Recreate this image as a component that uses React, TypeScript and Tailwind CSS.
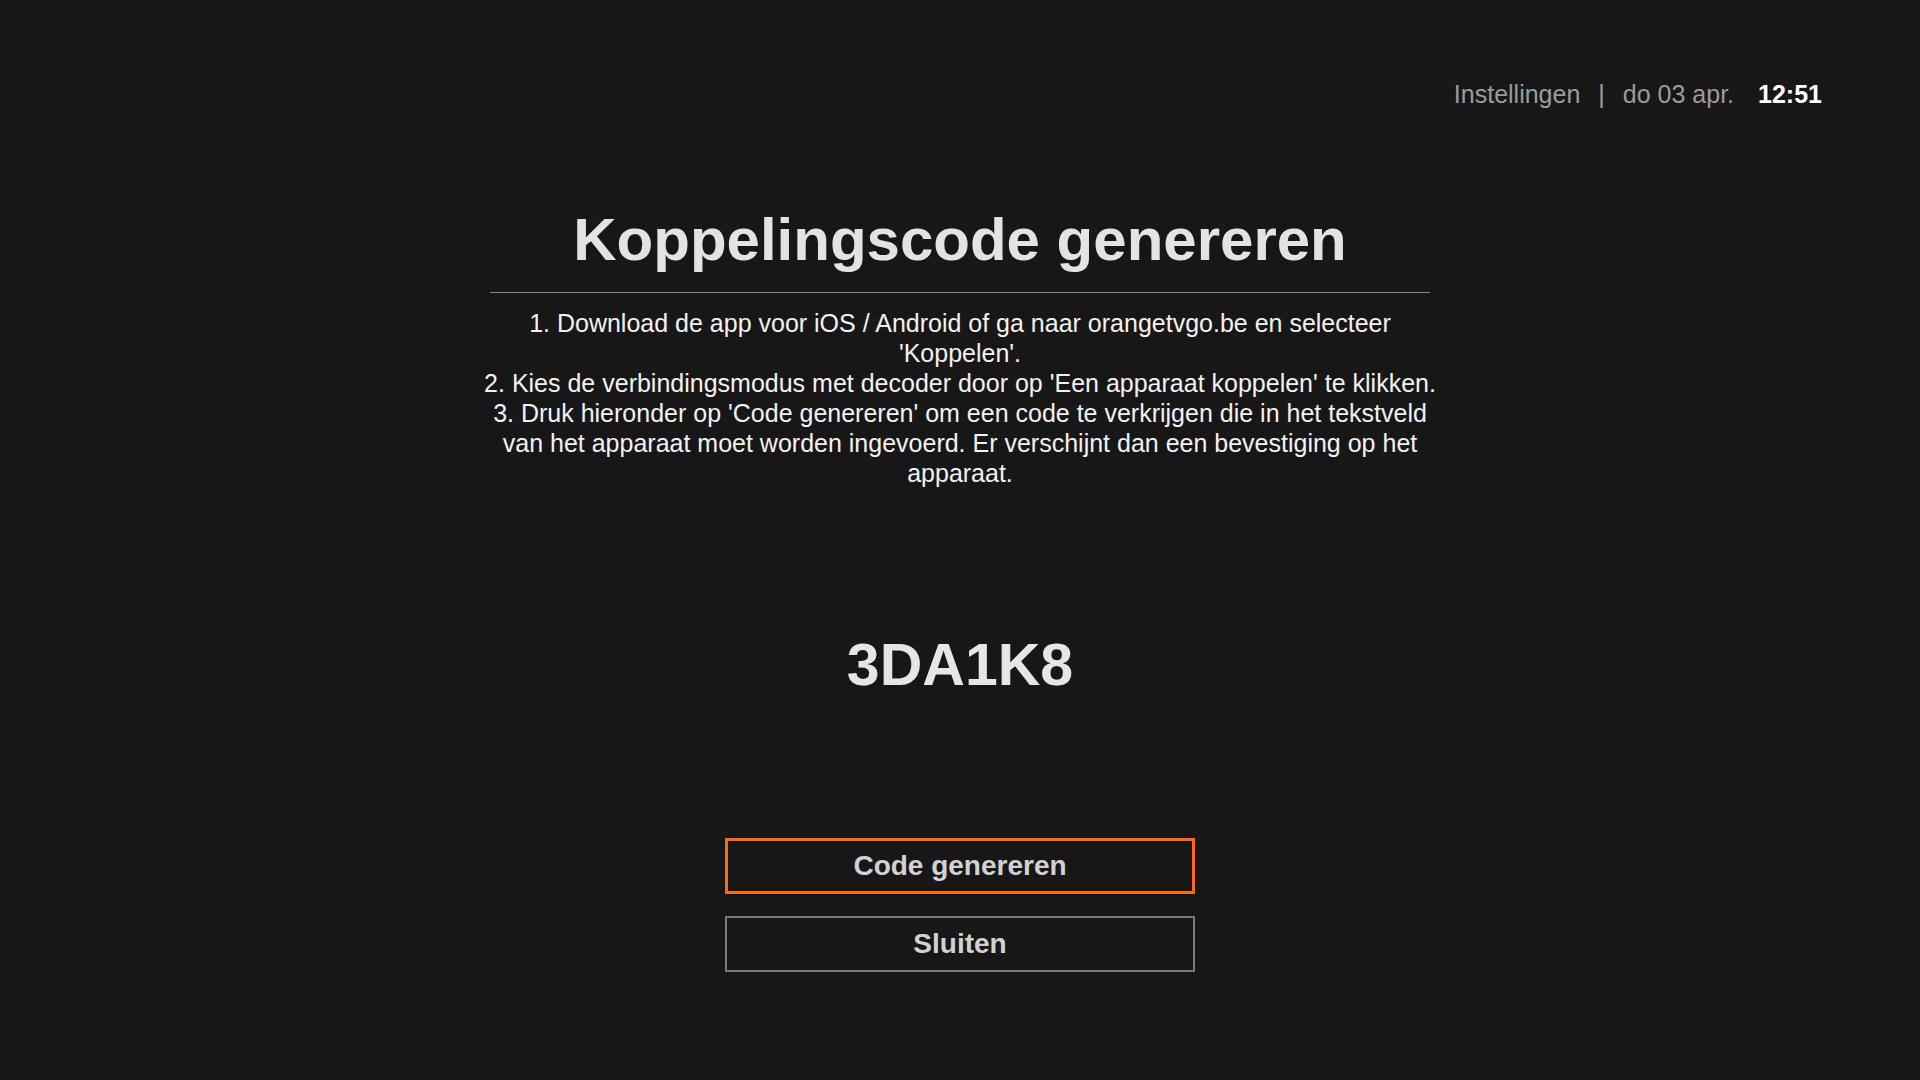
export default function App() {
  const steps = [
    "1. Download de app voor iOS / Android of ga naar orangetvgo.be en selecteer",
    "'Koppelen'.",
    "2. Kies de verbindingsmodus met decoder door op 'Een apparaat koppelen' te klikken.",
    "3. Druk hieronder op 'Code genereren' om een code te verkrijgen die in het tekstveld",
    "van het apparaat moet worden ingevoerd. Er verschijnt dan een bevestiging op het",
    "apparaat.",
  ];

  return (
    <div className="min-h-screen w-full bg-[#171717] font-['Liberation_Sans',Arial,sans-serif]">
      <header className="flex justify-end items-center pt-[78px] pr-[98px] text-[25px] leading-[32px]">
        <span className="text-[#9c9c9c]">Instellingen</span>
        <span className="text-[#9c9c9c] mx-[18px]">|</span>
        <span className="text-[#9c9c9c]">do 03 apr.</span>
        <span className="text-white font-bold ml-[24px]">12:51</span>
      </header>

      <main className="flex flex-col items-center">
        <h1 className="mt-[100px] text-[60px] leading-none font-bold text-[#e3e3e3]">
          Koppelingscode genereren
        </h1>
        <div className="mt-[22px] w-[940px] h-px bg-[#8c8c8c]" />
        <div className="mt-[15px] text-center text-[25px] leading-[30px] text-[#f2f2f2]">
          {steps.map((line) => (
            <div key={line} className="whitespace-nowrap">
              {line}
            </div>
          ))}
        </div>

        <div className="mt-[148px] text-[59px] leading-none font-bold text-[#e6e6e6]">
          3DA1K8
        </div>

        <button className="mt-[143px] w-[470px] h-[56px] border-[3px] border-[#ff6a0d] text-[28px] font-bold text-[#d2d2d2]">
          Code genereren
        </button>
        <button className="mt-[22px] w-[470px] h-[56px] border-2 border-[#7a7a7a] text-[28px] font-bold text-[#d2d2d2]">
          Sluiten
        </button>
      </main>
    </div>
  );
}
